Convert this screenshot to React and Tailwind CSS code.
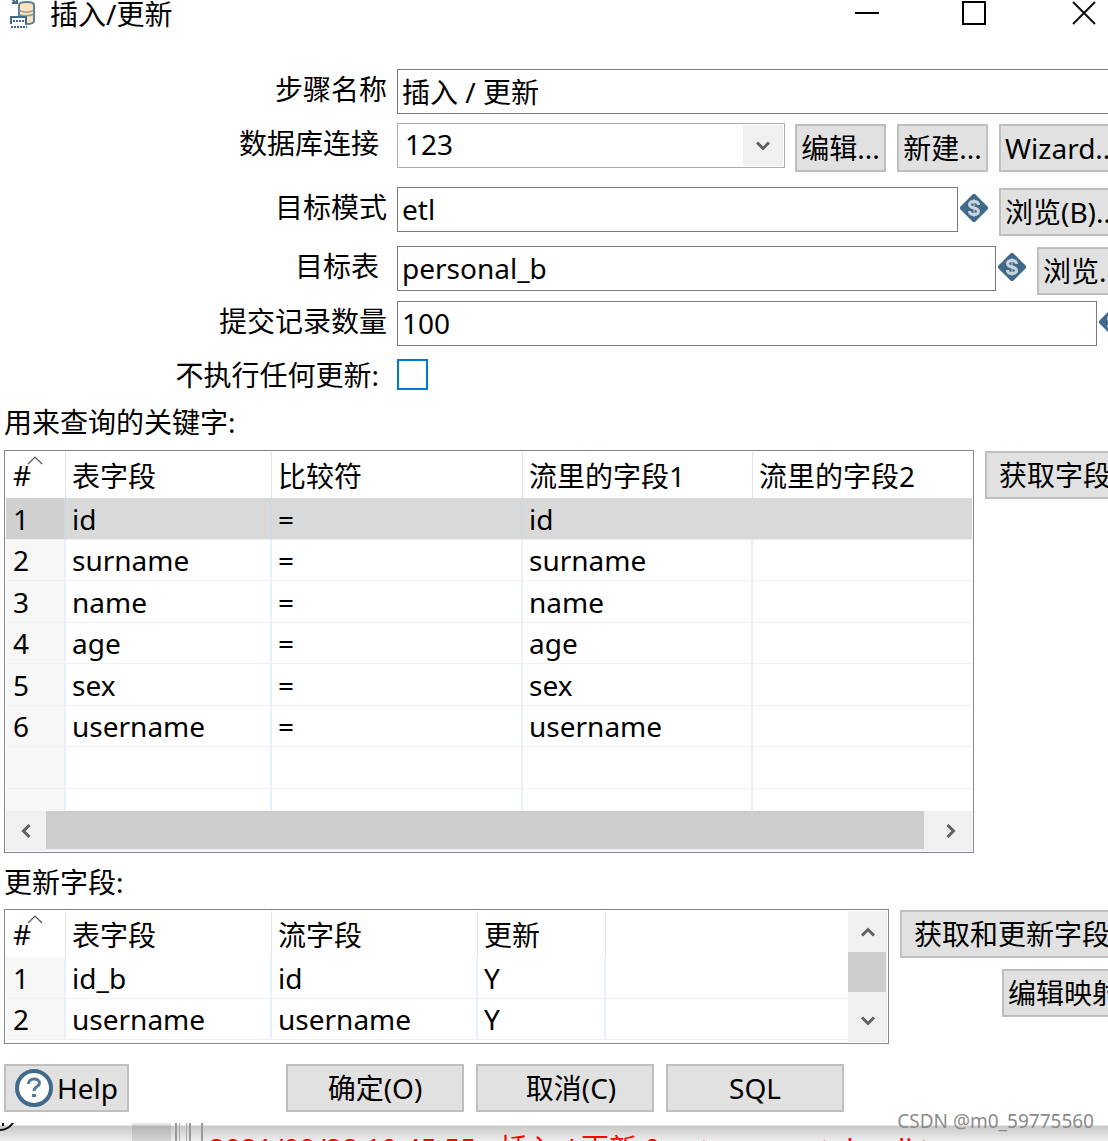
import { useState } from 'react';

const keyColumns = ['表字段', '比较符', '流里的字段1', '流里的字段2'];
const keyRows = ['id', 'surname', 'name', 'age', 'sex', 'username'].map((f) => [f, '=', f, '']);

const updateColumns = ['表字段', '流字段', '更新', ''];
const updateRows = [
  ['id_b', 'id', 'Y', ''],
  ['username', 'username', 'Y', ''],
];

const buttonBase =
  'mt-px h-12 shrink-0 whitespace-nowrap border-2 border-[#bfbfbf] bg-[#e1e1e1] leading-[42px]';
const inputBase = 'h-[45px] min-w-0 flex-1 border border-[#7a7a7a] bg-white px-1 pb-[2px] outline-none';

function StepIcon() {
  return (
    <svg width="28" height="30" viewBox="0 0 28 30" className="shrink-0" fill="none">
      <path d="M11 5c0-4 15-4 15 0v16c0 2-3 3-8 3v-8h-7z" fill="#fbe3bd" stroke="#5d7f95" strokeWidth="2" />
      <path d="M11 10c4 3 11 3 15 0M12 15c4 1 10 1 14-1" stroke="#8d9a98" strokeWidth="1.5" />
      <path d="M3 24v-7h15v7" fill="#fff" stroke="#3f6c8c" strokeWidth="2" />
      <path d="M5 21h12M3 27h16" stroke="#3f6c8c" strokeWidth="2" strokeDasharray="2 1" />
      <path d="M4 -1l4 4M9 -2v5H4" stroke="#3f6c8c" strokeWidth="2" />
    </svg>
  );
}

function VariableIcon() {
  return (
    <svg width="28" height="28" viewBox="0 0 28 28" className="mt-[7px] shrink-0" fill="none">
      <path d="M13 0h2l13 13v2L15 28h-2L0 15v-2z" fill="#41698a" />
      <path
        d="M18.500 11c0-2.500-2-3.500-4.500-3.500s-4.500 1-4.500 3.200c0 4.300 9 2.300 9 6.600 0 2.200-2 3.200-4.500 3.200s-4.500-1-4.500-3.500"
        stroke="#c9d5de"
        strokeWidth="3"
      />
      <path d="M14 5v18" stroke="#c9d5de" strokeWidth="2" strokeOpacity="0.5" />
    </svg>
  );
}

function Chevron({ className }) {
  return (
    <svg width="14" height="10" viewBox="0 0 14 10" className={className} fill="none">
      <path d="M1 1.500l6 6 6-6" stroke="#606060" strokeWidth="3" />
    </svg>
  );
}

function Row({ label, id, wide, children }) {
  return (
    <div className="flex items-start">
      <label
        htmlFor={id}
        className={
          wide
            ? 'w-[397px] shrink-0 pr-[10px] text-right leading-[40px]'
            : 'w-[397px] shrink-0 pr-[18px] text-right leading-[40px]'
        }
      >
        {label}
      </label>
      {children}
    </div>
  );
}

function Grid({ columns, rows, widths, selected, blank = 0 }) {
  const all = [...rows, ...Array.from({ length: blank }, () => ['', '', '', ''])];
  return (
    <table className="w-full table-fixed border-separate border-spacing-0 text-left">
      <colgroup>
        {widths.map((w, i) => (
          <col key={i} className={w} />
        ))}
      </colgroup>
      <thead>
        <tr className="h-[46px]">
          <th className="relative border-r border-[#e2e2e2] p-0 pl-[7px] font-normal">
            #
            <svg width="16" height="9" viewBox="0 0 16 9" className="absolute left-[21px] top-1" fill="none">
              <path d="M1 8l7-7 7 7" stroke="#555" strokeWidth="1.2" />
            </svg>
          </th>
          {columns.map((c, i) => (
            <th
              key={i}
              className="whitespace-nowrap border-r border-[#e2e2e2] p-0 pl-[6px] pt-[2px] font-normal last:border-r-0"
            >
              {c}
            </th>
          ))}
        </tr>
      </thead>
      <tbody>
        {all.map((row, i) => (
          <tr key={i} className={i === selected ? 'h-[42px] bg-[#d9d9d9]' : 'odd:h-[42px] even:h-[41px]'}>
            <td
              className={
                i === selected
                  ? 'border-b border-r-2 border-b-[#f0f0f0] border-r-[#d0d8e0] bg-[#d0d0d0] p-0 pl-[7px]'
                  : 'border-b border-r-2 border-b-[#f0f0f0] border-r-[#e8f0fa] bg-[#f7f7f7] p-0 pl-[7px]'
              }
            >
              {i < rows.length ? i + 1 : ''}
            </td>
            {row.map((cell, j) => (
              <td
                key={j}
                className={
                  i === selected
                    ? 'border-b border-r-2 border-b-[#f0f0f0] border-r-[#d0d8e0] p-0 pl-[6px] last:border-r-0'
                    : 'border-b border-r-2 border-b-[#f0f0f0] border-r-[#e8f0fa] p-0 pl-[6px] last:border-r-0'
                }
              >
                {cell}
              </td>
            ))}
          </tr>
        ))}
      </tbody>
    </table>
  );
}

export default function App() {
  const [stepName, setStepName] = useState('插入 / 更新');
  const [schema, setSchema] = useState('etl');
  const [table, setTable] = useState('personal_b');
  const [commit, setCommit] = useState('100');
  const [skipUpdate, setSkipUpdate] = useState(false);

  return (
    <div className="relative overflow-hidden bg-white font-['Noto_Sans','Noto_Sans_CJK_SC',sans-serif] text-[28px] leading-[38px] text-black">
      <header className="flex h-[69px] items-start pl-2">
        <StepIcon />
        <h1 className="ml-[14px] flex-1 leading-[28px]">插入/更新</h1>
        <div className="flex gap-[58px]">
          <button type="button" aria-label="最小化" className="h-[27px] w-[50px]">
            <svg width="50" height="27" viewBox="0 0 50 27" fill="none">
              <path d="M13 13h24" stroke="#000" strokeWidth="2" />
            </svg>
          </button>
          <button type="button" aria-label="最大化" className="h-[27px] w-[50px]">
            <svg width="50" height="27" viewBox="0 0 50 27" fill="none">
              <rect x="13" y="2" width="22" height="22" stroke="#000" strokeWidth="2" />
            </svg>
          </button>
          <button type="button" aria-label="关闭" className="h-[27px] w-[50px]">
            <svg width="50" height="27" viewBox="0 0 50 27" fill="none">
              <path d="M15 2l22 22M37 2L15 24" stroke="#111" strokeWidth="2" />
            </svg>
          </button>
        </div>
      </header>

      {/* the form is a little wider than the window, its right side is cut off */}
      <main className="-mr-6 pb-[11px]">
        <Row label="步骤名称" id="step" wide>
          <input id="step" className={inputBase} value={stepName} onChange={(e) => setStepName(e.target.value)} />
        </Row>

        <div className="mt-[9px]">
          <Row label="数据库连接" id="connection">
            <div className="relative mr-[10px] min-w-0 flex-1">
              <select
                id="connection"
                className="block h-[45px] w-full appearance-none border border-[#acacac] bg-white px-[7px] pb-[3px] outline-none"
              >
                <option>123</option>
              </select>
              <span className="pointer-events-none absolute inset-y-0.5 right-0.5 flex w-10 items-center justify-center bg-[#f0f0f0]">
                <Chevron />
              </span>
            </div>
            <div className="flex gap-[11px]">
              <button type="button" className={`${buttonBase} w-[91px]`}>编辑...</button>
              <button type="button" className={`${buttonBase} w-[91px]`}>新建...</button>
              <button type="button" className={`${buttonBase} w-[133px] pl-1 text-left`}>Wizard...</button>
            </div>
          </Row>
        </div>

        <div className="mt-[15px]">
          <Row label="目标模式" id="schema" wide>
            <input id="schema" className={inputBase} value={schema} onChange={(e) => setSchema(e.target.value)} />
            <div className="ml-[2px] flex gap-[11px]">
              <VariableIcon />
              <button type="button" className={`${buttonBase} w-[133px] pl-1 text-left`}>浏览(B)...</button>
            </div>
          </Row>
        </div>

        <div className="mt-[10px]">
          <Row label="目标表" id="table">
            <input id="table" className={inputBase} value={table} onChange={(e) => setTable(e.target.value)} />
            <div className="ml-[2px] flex gap-[11px]">
              <VariableIcon />
              <button type="button" className={`${buttonBase} w-[95px] pl-1 text-left`}>浏览...</button>
            </div>
          </Row>
        </div>

        <div className="mt-[6px]">
          <Row label="提交记录数量" id="commit" wide>
            <input id="commit" className={inputBase} value={commit} onChange={(e) => setCommit(e.target.value)} />
            <div className="ml-[2px] mr-[5px]">
              <VariableIcon />
            </div>
          </Row>
        </div>

        <div className="mt-[9px]">
          <Row label="不执行任何更新:" id="skip">
            <input
              id="skip"
              type="checkbox"
              className="mt-1 size-[31px] appearance-none border-2 border-[#0078d7] bg-white checked:bg-[#0078d7]"
              checked={skipUpdate}
              onChange={(e) => setSkipUpdate(e.target.checked)}
            />
          </Row>
        </div>

        <section className="pl-1">
          <h2 className="mt-2 h-[47px]">用来查询的关键字:</h2>
          <div className="flex items-start gap-[11px]">
            <div className="min-w-0 flex-1 border border-[#828790] p-px">
              <div className="h-[359px] overflow-hidden">
                <Grid
                  columns={keyColumns}
                  rows={keyRows}
                  widths={['w-[60px]', 'w-[206px]', 'w-[251px]', 'w-[230px]', '']}
                  selected={0}
                  blank={2}
                />
              </div>
              <div className="flex h-10 items-center bg-[#f0f0f0]">
                <button type="button" aria-label="向左滚动" className="flex w-10 justify-center">
                  <Chevron className="rotate-90" />
                </button>
                <div className="h-[38px] flex-1 self-start bg-[#cdcdcd]" />
                <button type="button" aria-label="向右滚动" className="flex w-12 justify-center pl-[6px]">
                  <Chevron className="-rotate-90" />
                </button>
              </div>
            </div>
            <button type="button" className={`${buttonBase} w-[147px] pl-3 text-left`}>获取字段</button>
          </div>

          <h2 className="mt-[10px] h-[46px]">更新字段:</h2>
          <div className="flex items-start gap-[11px]">
            <div className="flex h-[135px] min-w-0 flex-1 overflow-hidden border border-[#828790] p-px">
              <div className="min-w-0 flex-1 overflow-hidden">
                <Grid
                  columns={updateColumns}
                  rows={updateRows}
                  widths={['w-[60px]', 'w-[206px]', 'w-[206px]', 'w-[128px]', '']}
                />
              </div>
              <div className="flex w-[39px] flex-col items-center bg-[#f0f0f0]">
                <button type="button" aria-label="向上滚动" className="flex h-[41px] items-center">
                  <Chevron className="rotate-180" />
                </button>
                <div className="h-10 w-[38px] self-start bg-[#cdcdcd]" />
                <button type="button" aria-label="向下滚动" className="flex flex-1 items-center pt-2">
                  <Chevron />
                </button>
              </div>
            </div>
            <div className="flex w-[232px] flex-col items-end gap-[10px]">
              <button type="button" className={`${buttonBase} w-full pl-3 text-left`}>获取和更新字段</button>
              <button type="button" className={`${buttonBase} w-[130px] pl-1 text-left`}>编辑映射</button>
            </div>
          </div>

          <div className="mt-[19px] flex">
            <button type="button" className={`${buttonBase} flex w-[125px] items-center justify-center gap-1`}>
              <svg width="38" height="38" viewBox="0 0 38 38" fill="none">
                <circle cx="19" cy="19" r="17" fill="#fff" stroke="#41698a" strokeWidth="4" />
                <path d="M13.500 15c0-7 11-6 11-1 0 4-5.500 3-5.500 8" stroke="#55799a" strokeWidth="3" />
                <path d="M17 25h4v3h-4z" fill="#55799a" />
              </svg>
              Help
            </button>
            <div className="ml-[157px] flex gap-3">
              <button type="button" className={`${buttonBase} w-[178px]`}>确定(O)</button>
              <button type="button" className={`${buttonBase} w-[178px] pl-3`}>取消(C)</button>
              <button type="button" className={`${buttonBase} w-[178px]`}>SQL</button>
            </div>
          </div>
        </section>
      </main>

      {/* log window that shows below the dialog */}
      <div className="flex h-[18px] overflow-hidden bg-linear-to-b from-white from-[2px] via-[#c8c8c8] via-[3px] to-[#eeeeee] text-[#f00]">
        <div className="w-[132px] shrink-0">
          <svg width="16" height="10" viewBox="0 0 16 10" fill="none">
            <path d="M0 7c6 0 10-3 13-7M3 0v3" stroke="#111" strokeWidth="2" />
          </svg>
        </div>
        <div className="w-[39px] shrink-0 bg-black/10" />
        <div className="ml-1 w-4 shrink-0 border-x-2 border-[#999]">
          <div className="ml-[2px] h-full w-2 border-x border-[#aaa]" />
        </div>
        <div className="ml-[10px] border-l-2 border-[#999] pl-[6px]">
          <p className="mt-[6px] whitespace-nowrap">2021/09/28 10:45:55 - 插入 / 更新.0 - at org.pentaho.di.trans</p>
        </div>
      </div>
      <p className="absolute bottom-[7px] right-[14px] text-[19px] leading-[26px] text-[#8c8c8c]">CSDN @m0_59775560</p>
    </div>
  );
}
